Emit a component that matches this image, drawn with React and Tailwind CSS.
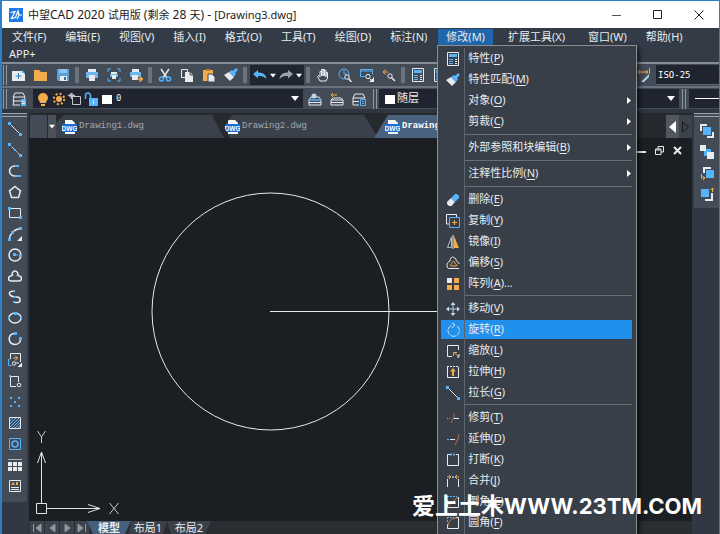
import { useState } from "react"

const B = "#55b4fa"
const W = "#e8ebee"
const O = "#f2ac4c"

function Ico({ children }) {
  return (
    <svg width="14" height="14" viewBox="0 0 14 14" fill="none" className="shrink-0" aria-hidden="true">
      {children}
    </svg>
  )
}

const Dot = ({ x, y, c = B, s = 3 }) => <rect x={x} y={y} width={s} height={s} fill={c} />

const icons = {
  novo: (
    <>
      <path d="M0 3h10l3 3v7H0z" fill={W} />
      <path d="M10 2v3h3" fill={B} />
      <path d="M6.500 5v6M3.500 8h6" stroke="#2f7fc0" />
    </>
  ),
  open: <path d="M0 2h5l2 2h6v9H0z" fill={O} />,
  save: (
    <>
      <path d="M1 1h12v12H2l-1-1z" fill="#5b9fd8" />
      <path d="M3 1h8v4H3z" fill="#8fc4ee" />
      <path d="M4 8h7v5H4z" fill={W} />
      <path d="M8 9h2v3H8z" fill="#3d6c96" />
    </>
  ),
  print: (
    <>
      <path d="M3 1h8v3H3z" fill={W} />
      <path d="M1 4h12v6H1z" fill="#6fb6ec" />
      <path d="M4 7h6v6H4z" fill={W} />
    </>
  ),
  preview: (
    <>
      <path d="M1 4V1h3M10 1h3v3M1 10v3h3M10 13h3v-3" stroke={B} />
      <path d="M4 4h6v2H4z" fill={W} />
      <path d="M3 6h8v3H3z" fill="#6fb6ec" />
      <path d="M5 7h4v4H5z" fill={W} />
    </>
  ),
  publish: (
    <>
      <path d="M3 1h7v3H3z" fill={W} />
      <path d="M1 4h11v5H1z" fill="#6fb6ec" />
      <path d="M3 7h6v5H3z" fill={W} />
      <path d="M8 11h5M10.500 8.500l3 2.500-3 2.500" stroke={O} strokeWidth="1.500" />
    </>
  ),
  cut: (
    <>
      <path d="M3 1l6 9M11 1L5 10" stroke={W} strokeWidth="1.500" />
      <circle cx="3.500" cy="11" r="2" stroke={B} strokeWidth="1.500" />
      <circle cx="10.500" cy="11" r="2" stroke={B} strokeWidth="1.500" />
    </>
  ),
  copy: (
    <>
      <path d="M1.500 1.500h6v8h-6z" stroke={W} />
      <path d="M5 4h5l3 3v7H5z" fill={W} />
      <path d="M10 4v3h3" stroke="#434b57" />
    </>
  ),
  paste: (
    <>
      <path d="M1 2h10v11H1z" fill={O} />
      <path d="M4 1h4v2H4z" fill="#b9793a" />
      <path d="M6 6h4l3 3v5H6z" fill={W} stroke="#434b57" />
    </>
  ),
  brush: (
    <>
      <path d="M0 7l5-3 5 5-4 4z" fill={W} />
      <path d="M5 4l3-2 1 1 3-3 2 2-3 3 1 1-2 3z" fill={B} />
    </>
  ),
  undo: <path d="M0 6l5-4v2.500c5 0 8 2 8.500 6.500C11 8.500 9 8 5 8v2.500z" fill={B} />,
  redo: <path d="M14 6L9 2v2.500C4 4.500 1 6.500.500 11 3 8.500 5 8 9 8v2.500z" fill="#9aa3ad" />,
  hand: (
    <path
      d="M4 13L1.500 8.500l1-1L4 9V3.500h1.500V8 1.500H7V8 1.500h1.500V8 2.500H10V9 4.500h1.500V10L10 13z"
      stroke={W}
    />
  ),
  zoomTime: (
    <>
      <circle cx="6" cy="6" r="5" stroke={B} />
      <path d="M6 2v4h3" stroke={B} />
      <circle cx="9" cy="9" r="2.200" fill="#434b57" stroke={W} />
      <path d="M10.500 10.500L13.500 14" stroke={W} strokeWidth="1.500" />
    </>
  ),
  zoomWin: (
    <>
      <path d="M.500 8.500v-7h12v5M.500 3h12M.500 8.500H5" stroke={B} />
      <circle cx="8" cy="8.500" r="2.200" stroke={W} />
      <path d="M9.500 10.500l2 2" stroke={W} />
      <path d="M14 9v5H9z" fill={W} />
    </>
  ),
  zoomPrev: (
    <>
      <path d="M1 4h5M3.500 1.500L1 4l2.500 2.500" stroke={O} />
      <circle cx="8" cy="8" r="2.200" stroke={W} />
      <path d="M9.500 9.500L13 13" stroke={W} strokeWidth="1.500" />
    </>
  ),
  props: (
    <>
      <path d="M1.500.500h11v13h-11z" stroke={W} />
      <path d="M3 2h8v3H3z" fill={B} />
      <path d="M3 7.500h4M3 9.500h4M3 11.500h4" stroke={B} />
      <path d="M9 7.500h2M9 9.500h2M9 11.500h2" stroke={W} />
    </>
  ),
  layers: (
    <>
      <path d="M1 5l2-4h8l2 4zM1 9l1-4M13 7l-1-2M1 9h8M1 13l1-4M1 13h7" stroke={W} />
      <path d="M9 7h5v7H9z" fill={B} />
      <path d="M10 9.500h3M10 11.500h3" stroke={W} />
    </>
  ),
  layerCur: (
    <>
      <path d="M1 8l2-3h8l2 3v5H1zM1 10.500h12" stroke={W} />
      <path d="M1 8h12" stroke={B} strokeWidth="1.500" />
      <circle cx="6" cy="4" r="2.500" fill="#b9d4e6" />
    </>
  ),
  layerPrev: (
    <>
      <path d="M1 8l2-2h8l2 2v5H1zM1 8h12M1 10.500h12" stroke={W} />
      <path d="M1 3h6M3 1L1 3l2 2" stroke={O} />
    </>
  ),
  layerState: (
    <>
      <path d="M1 6l2-4h8l2 4zM1 6v7h6M1 9.500h6" stroke={W} />
      <path d="M8.500 7.500h5v6h-5z" stroke={B} />
      <path d="M10 9.500h2M10 11.500h2" stroke={B} />
    </>
  ),
  bulb: <path d="M7 1a5 5 0 0 1 5 5c0 2-2 3-2 5H4c0-2-2-3-2-5a5 5 0 0 1 5-5zM5 12h4v2H5z" fill={O} />,
  sun: (
    <>
      <circle cx="7" cy="7" r="3" fill={O} />
      <circle cx="7" cy="7" r="5.200" stroke={O} strokeWidth="2" strokeDasharray="2 2.080" />
    </>
  ),
  frame: (
    <>
      <path d="M4.500 4.500h8v8h-8zM0 3.500h7M3.500 1v6" stroke="#c3c7cb" />
      <circle cx="3.500" cy="3.500" r="2" stroke="#c3c7cb" />
    </>
  ),
  lock: (
    <>
      <path d="M1.500 7V3.500a2.500 2.500 0 0 1 5 0V7" stroke={B} strokeWidth="1.500" />
      <path d="M5 6h9v8H5z" fill={B} />
      <path d="M9 8h1v4H9z" fill={W} />
    </>
  ),
  white: <path d="M2 3h10v9H2z" fill="#fff" />,
  dim: (
    <>
      <path d="M.500 1v12M13.500 0v6" stroke="#aab4bd" />
      <path d="M2 4h10M4 2L2 4l2 2M10 2l2 2-2 2" stroke={O} />
      <path d="M13 6v3l-5 5H5z" fill="#a9d3ea" />
    </>
  ),
  line: (
    <>
      <path d="M1 1l12 12" stroke={W} />
      <Dot x={0} y={0} />
      <Dot x={11} y={11} />
    </>
  ),
  xline: (
    <>
      <path d="M1 1l12 12" stroke={W} strokeDasharray="3 1" />
      <Dot x={0} y={0} />
      <Dot x={6} y={6} s={2} />
      <Dot x={11} y={11} />
    </>
  ),
  pline: (
    <>
      <path d="M10 2H6.500a5 5 0 0 0 0 10H12" stroke={W} strokeWidth="1.500" />
      <path d="M7 2h4M7 12h6" stroke={B} strokeWidth="2" />
    </>
  ),
  polygon: <path d="M7 1.500l5.500 4.300-2 6.700h-7l-2-6.700z" stroke={W} strokeWidth="1.500" />,
  rect: (
    <>
      <path d="M1.500 2.500h11v9h-11z" stroke={W} />
      <Dot x={0} y={1} />
      <Dot x={11} y={10} />
    </>
  ),
  arc: (
    <>
      <path d="M1 13C2 7 6 2 13 1.500" stroke={W} strokeWidth="1.500" />
      <Dot x={0} y={11} />
      <Dot x={3} y={4} />
      <Dot x={11} y={0} />
      <path d="M14 9v5H9z" fill={W} />
    </>
  ),
  circle: (
    <>
      <circle cx="7" cy="7" r="6" stroke={W} strokeWidth="1.500" />
      <path d="M7 7h6" stroke={B} strokeDasharray="3 1" />
      <Dot x={5} y={5} />
      <Dot x={11} y={6} />
    </>
  ),
  cloud: (
    <path
      d="M3 12a2.300 2.300 0 0 1 0-5 2 2 0 0 1 1.500-1 2.800 2.800 0 1 1 5 0A2 2 0 0 1 11 7a2.500 2.500 0 0 1 0 5z"
      stroke={W}
      strokeWidth="1.500"
    />
  ),
  spline: (
    <>
      <path d="M7 1.500C3 .500 1 2 1.500 4S5 7 9 7s4 5 1 5.500H7" stroke={W} strokeWidth="1.500" />
      <Dot x={5} y={0} s={2} />
      <Dot x={6} y={6} s={2} />
      <Dot x={5} y={11} s={2} />
    </>
  ),
  ellipse: (
    <>
      <ellipse cx="7" cy="7" rx="6" ry="5" stroke={W} strokeWidth="1.500" />
      <Dot x={6} y={1} />
      <Dot x={0} y={6} s={2} />
      <Dot x={12} y={6} s={2} />
    </>
  ),
  earc: (
    <>
      <path d="M6 1.500C-1 3 0 12 7 12.500c3 0 5.500-2 5.500-5.500" stroke={W} strokeWidth="1.500" />
      <Dot x={6} y={0} />
      <Dot x={11} y={5} />
    </>
  ),
  insert: (
    <>
      <path d="M2.500 6V.500h10V9" stroke={W} />
      <path d="M2 6.500H.500v6H4" stroke={B} />
      <path d="M5 5h5M7 2.500L9.500 5 7 7.500" stroke={O} />
      <circle cx="6" cy="10.500" r="1.700" stroke={W} />
      <path d="M14 10v4h-4zM8 10h3" stroke={W} fill={W} />
    </>
  ),
  block: (
    <>
      <path d="M8 12.500H2.500v-10h8V8" stroke={W} />
      <circle cx="11" cy="11" r="1.800" stroke={W} />
      <Dot x={1} y={1} s={2} />
    </>
  ),
  points: (
    <>
      {[[2, 2], [10, 2], [6, 6], [2, 10], [10, 10]].map(([x, y]) => (
        <Dot key={`${x}-${y}`} x={x} y={y} s={2} />
      ))}
    </>
  ),
  hatch: (
    <>
      <path d="M2 5l3-3M2 8l6-6M2 11l9-9M4 12l8-8M7 12l5-5M10 12l2-2" stroke={B} />
      <path d="M1.500 1.500h11v11h-11z" stroke={W} />
    </>
  ),
  region: (
    <>
      <path d="M1.500 1.500h11v11h-11z" stroke={B} />
      <circle cx="7" cy="7" r="3" stroke={B} strokeWidth="1.500" />
    </>
  ),
  table: (
    <>
      <path d="M0 1.500h14" stroke="#aeb4ba" />
      {[[0, 4], [5, 4], [10, 4], [0, 9], [5, 9], [10, 9]].map(([x, y]) => (
        <Dot key={`${x}-${y}`} x={x} y={y} s={4} c={W} />
      ))}
    </>
  ),
  mtext: (
    <>
      <path d="M1.500 1.500h11v11h-11z" stroke={W} />
      <path d="M3 6l2-3 2 3h1V3h2v3z" fill={O} />
      <path d="M3 8.500h8M3 10.500h8" stroke={W} />
    </>
  ),
  erase: (
    <>
      <path d="M1 9l4-4 4 4-3.500 4H3l-2-2z" fill={W} />
      <path d="M5 5l4-4h2l2 2v2L9 9z" fill={B} />
    </>
  ),
  duplicate: (
    <>
      <path d="M3 10H.500V.500h10V3" stroke={W} />
      <path d="M3.500 3.500h10v10h-10z" stroke={B} />
      <path d="M8.500 6v5M6 8.500h5" stroke={O} />
    </>
  ),
  mirror: (
    <>
      <path d="M5.500 2v10.500H1.500z" stroke="#b9bec3" />
      <path d="M8 1l5 12H8z" fill={O} />
      <path d="M7 0v14" stroke={W} />
    </>
  ),
  offset: (
    <>
      <path d="M13 8c0-2-2-2-2.500-3C9-.500 4 0 4 5 2 6 1 7 1 9.500S2 12.500 4 12.500h9" stroke={W} />
      <path d="M5 10c-1-1 0-2 1-2.500 0-3 3-3 3 0 1 .500 2 1 1.500 2.500z" stroke={O} />
    </>
  ),
  array: (
    <>
      <Dot x={1} y={1} s={5} c={W} />
      <Dot x={8} y={1} s={5} c={O} />
      <Dot x={1} y={8} s={5} c={O} />
      <Dot x={8} y={8} s={5} c={O} />
    </>
  ),
  move: (
    <>
      <path d="M7 2v10M2 7h10" stroke="#b5d3e8" />
      <path d="M7 0l2.500 3h-5zM7 14l2.500-3h-5zM0 7l3-2.500v5zM14 7l-3-2.500v5z" fill="#c5d8e5" />
    </>
  ),
  rotate: (
    <>
      <path d="M11 3A5.700 5.700 0 1 1 6 2.200" stroke="#cfe0ec" strokeDasharray="5 1" />
      <path d="M6 0l3 2-3 3" stroke="#dff0ff" />
    </>
  ),
  scale: (
    <>
      <path d="M6 12.500H1.500v-11h11V6" stroke={W} />
      <path d="M7.500 12V8.500H11M9 9.500l4 3" stroke={O} />
      <path d="M11 13h2v-3" stroke={W} />
    </>
  ),
  stretch: (
    <>
      <path d="M1.500 2v10.500h11V2" stroke={W} />
      <path d="M1 1.500h12" stroke={W} strokeDasharray="2 1" />
      <path d="M7 3l3 3.500H8V11H6V6.500H4z" fill={O} />
    </>
  ),
  trim: (
    <>
      <path d="M1 7.500h4" stroke={B} strokeDasharray="1 1" />
      <path d="M8 7.500h5" stroke={W} />
      <path d="M8 2v4l-3 6" stroke="#b66d45" />
    </>
  ),
  extend: (
    <>
      <path d="M1 7.500h2" stroke={B} />
      <path d="M4 7.500h5" stroke={W} />
      <path d="M13 2l-1 5-3 6" stroke="#b66d45" />
    </>
  ),
  break: (
    <>
      <path d="M4 1.500H1.500v11h11v-11H10" stroke={W} />
      <path d="M4 1.500h6" stroke={B} strokeWidth="2" strokeDasharray="2 1" />
    </>
  ),
  join: (
    <>
      <path d="M1.500 13V5M12.500 13V5" stroke={W} />
      <path d="M1 3h4M3 1l2 2-2 2M13 3H9M11 1L9 3l2 2" stroke={O} />
      <Dot x={6} y={2} s={2} />
    </>
  ),
  chamfer: (
    <>
      <path d="M1.500 6v6.500h11V2" stroke={W} />
      <path d="M1 1.500h10M1.500 1v5" stroke={B} strokeDasharray="2 1" />
      <path d="M2 11l10-9" stroke="#d0834a" />
    </>
  ),
  fillet: (
    <>
      <path d="M1.500 8v4.500h11V1.500H10" stroke={W} />
      <path d="M1 1.500h7M1.500 1v6" stroke={B} strokeDasharray="2 1" />
      <path d="M2 10c0-4 3-8 9-8" stroke="#d0834a" />
    </>
  ),
  front: (
    <>
      <path d="M1 7V1h6M13 8v5H7" stroke={W} strokeWidth="2" />
      <path d="M3 3h8v8H3z" fill={B} />
    </>
  ),
  back: (
    <>
      <path d="M4 4h7v7H4z" fill={B} />
      <path d="M0 0h6v6H0zM7 7h7v7H7z" fill={W} />
    </>
  ),
  above: (
    <>
      <path d="M4 7V2h7" stroke={W} strokeWidth="2" />
      <path d="M6 4h8v8H6z" fill={B} />
      <path d="M1.500 8v4H5M3 10l2 2-2 2" stroke={O} />
    </>
  ),
  under: (
    <>
      <path d="M12 6v7H5" stroke={W} strokeWidth="2" />
      <path d="M1 2h8v8H1z" fill={B} />
      <path d="M12.500 5V1M10.500 3l2-2 2 2" stroke={O} />
    </>
  ),
}

const menus = [
  ["文件", "F"],
  ["编辑", "E"],
  ["视图", "V"],
  ["插入", "I"],
  ["格式", "O"],
  ["工具", "T"],
  ["绘图", "D"],
  ["标注", "N"],
  ["修改", "M"],
  ["扩展工具", "X"],
  ["窗口", "W"],
  ["帮助", "H"],
]

const modifyMenu = [
  [["props", "特性", "P"], ["brush", "特性匹配", "M"], [null, "对象", "O", true], [null, "剪裁", "C", true]],
  [[null, "外部参照和块编辑", "B", true]],
  [[null, "注释性比例", "N", true]],
  [["erase", "删除", "E"], ["duplicate", "复制", "Y"], ["mirror", "镜像", "I"], ["offset", "偏移", "S"], ["array", "阵列", "A", false, "..."]],
  [["move", "移动", "V"], ["rotate", "旋转", "R"], ["scale", "缩放", "L"], ["stretch", "拉伸", "H"], ["line", "拉长", "G"]],
  [["trim", "修剪", "T"], ["extend", "延伸", "D"], ["break", "打断", "K"], ["join", "合并", "J"], ["chamfer", "倒角", "C"], ["fillet", "圆角", "F"]],
]

const drawTools = [
  ["line", "直线"],
  ["xline", "构造线"],
  ["pline", "多段线"],
  ["polygon", "正多边形"],
  ["rect", "矩形"],
  ["arc", "圆弧"],
  ["circle", "圆"],
  ["cloud", "修订云线"],
  ["spline", "样条曲线"],
  ["ellipse", "椭圆"],
  ["earc", "椭圆弧"],
  ["insert", "插入块"],
  ["block", "创建块"],
  ["points", "点"],
  ["hatch", "图案填充"],
  ["region", "面域"],
  ["table", "表格"],
  ["mtext", "多行文字"],
]

function Tool({ icon, label }) {
  return (
    <button type="button" aria-label={label} className="flex h-5 w-5 shrink-0 items-center justify-center hover:bg-white/10">
      <Ico>{icons[icon]}</Ico>
    </button>
  )
}

const Grip = () => <span className="h-5 w-1 shrink-0 border-x border-[#8d98a5]" />
const Divider = () => <span className="mr-px h-4 w-1 shrink-0 bg-[#6b737d]" />

function Caret({ small }) {
  return (
    <svg width="8" height="5" viewBox="0 0 8 5" className={small ? "w-[6px] shrink-0" : "shrink-0"} aria-hidden="true">
      <path d="M0 0h8L4 5z" fill="#fff" />
    </svg>
  )
}

function ModifyMenu() {
  const [active, setActive] = useState("旋转")
  return (
    <div className="absolute -left-px top-4 z-20 w-[200px] border border-[#8b8f93] bg-[#383f48] py-0.5 shadow-[3px_3px_4px_rgba(0,0,0,0.5)]">
      {modifyMenu.map((group, i) => (
        <ul
          key={i}
          className={
            i === 0
              ? ""
              : i > 3
                ? "ml-[27px] mr-1 mt-px border-t border-[#6a6e73] pt-0.5"
                : "ml-[27px] mr-1 mt-0.5 border-t border-[#6a6e73] pt-0.5"
          }
        >
          {group.map(([icon, label, key, sub, tail]) => (
            <li key={label} className={i === 0 ? "ml-[3px] mr-1 py-px" : "-ml-6 py-px"}>
              <button
                type="button"
                onMouseEnter={() => setActive(label)}
                className={
                  label === active
                    ? "flex h-[19px] w-full items-center bg-[#2190ec] text-left"
                    : "flex h-[19px] w-full items-center text-left"
                }
              >
                <span className="flex w-[23px] justify-center">{icon && <Ico>{icons[icon]}</Ico>}</span>
                <span className="pl-1">
                  {label}(<u className="underline-offset-2">{key}</u>){tail}
                </span>
                {sub && (
                  <svg width="4" height="7" viewBox="0 0 4 7" className="ml-auto mr-px" aria-hidden="true">
                    <path d="M0 0l4 3.500L0 7z" fill="#fff" />
                  </svg>
                )}
              </button>
            </li>
          ))}
        </ul>
      ))}
      <span className="pointer-events-none absolute bottom-0 left-[26px] top-0.5 w-px bg-[#5d636a]" />
    </div>
  )
}

function DwgIcon() {
  return (
    <svg width="15" height="14" viewBox="0 0 15 14" className="shrink-0" aria-hidden="true">
      <path d="M3 0h7l3 3v11H3z" fill="#f4f8fb" />
      <rect y="4" width="15" height="8" rx="1" fill="#1a6fd6" />
      <text x="7.500" y="10.500" textAnchor="middle" fontSize="6.500" fontWeight="bold" fill="#fff" fontFamily="Liberation Sans, sans-serif">
        DWG
      </text>
    </svg>
  )
}

function TitleBar() {
  return (
    <header className="flex h-[27px] shrink-0 items-center bg-white pl-[7px] text-[11px] text-[#1c1c1c]">
      <svg width="14" height="14" viewBox="0 0 14 14" aria-hidden="true">
        <path d="M0 0h14v14H0z" fill="#1f78e6" />
        <path d="M1.500 4.500L6 3.500 2.500 10.500l4-1L9 3l1 4 3 0M8 11l2-4" fill="none" stroke="#fff" strokeWidth="1.200" />
      </svg>
      <h1 className="ml-[5px] text-[12px] leading-4">
        <span className="text-[11px]">中望</span>CAD 2020 <span className="text-[11px]">试用版</span> (
        <span className="text-[11px]">剩余</span> 28 <span className="text-[11px]">天</span>) -{" "}
        <span className="text-[11px]">[Drawing3.dwg]</span>
      </h1>
      <div className="ml-auto flex">
        <button type="button" aria-label="最小化" className="flex h-6 w-[41px] items-center justify-center">
          <svg width="10" height="10" stroke="#555"><path d="M0 5.500h9" /></svg>
        </button>
        <button type="button" aria-label="最大化" className="flex h-6 w-[41px] items-center justify-center">
          <svg width="10" height="10" stroke="#222" fill="none"><path d="M.500.500h8v8h-8z" /></svg>
        </button>
        <button type="button" aria-label="关闭" className="flex h-6 w-[41px] items-center justify-center">
          <svg width="10" height="10" stroke="#222"><path d="M.500.500l9 9M9.500.500l-9 9" /></svg>
        </button>
      </div>
    </header>
  )
}

function MenuBar() {
  return (
    <nav className="shrink-0 border-b-2 border-[#858d98] bg-[#323b46] pt-px">
      <ul className="flex gap-[3px] pl-0.5">
        {menus.map(([label, key]) => (
          <li key={key} className={key === "X" ? "relative mx-1" : "relative"}>
            <button
              type="button"
              className={key === "M" ? "h-4 bg-[#1f66ac] px-2 leading-4 whitespace-nowrap" : "h-4 px-2 leading-4 whitespace-nowrap"}
            >
              {label}({key})
            </button>
            {key === "M" && <ModifyMenu />}
          </li>
        ))}
      </ul>
      <button type="button" className="h-4 px-[7px] leading-4">APP+</button>
    </nav>
  )
}

function Toolbars() {
  return (
    <div className="shrink-0 bg-[#434b57]">
      <div className="flex h-6 items-center gap-0.5 border-b-2 border-[#69727e] pl-px">
        <Grip />
        <Tool icon="novo" label="新建" />
        <Tool icon="open" label="打开" />
        <Tool icon="save" label="保存" />
        <Divider />
        <Tool icon="print" label="打印" />
        <Tool icon="preview" label="打印预览" />
        <Tool icon="publish" label="发布" />
        <Divider />
        <Tool icon="cut" label="剪切" />
        <Tool icon="copy" label="复制" />
        <Tool icon="paste" label="粘贴" />
        <Tool icon="brush" label="特性匹配" />
        <Divider />
        <div className="flex h-5 items-center bg-[#1f2630] pr-0.5">
          <Tool icon="undo" label="放弃" />
          <Caret small />
          <Tool icon="redo" label="重做" />
          <Caret small />
        </div>
        <Divider />
        <Tool icon="hand" label="平移" />
        <Tool icon="zoomTime" label="实时缩放" />
        <Tool icon="zoomWin" label="窗口缩放" />
        <Tool icon="zoomPrev" label="上一个" />
        <Divider />
        <Tool icon="props" label="特性" />
        <Tool icon="props" label="特性面板" />
        <span className="flex-1" />
        <Tool icon="dim" label="标注样式" />
        <input
          aria-label="当前标注样式"
          defaultValue="ISO-25"
          className="ml-px h-5 w-[63px] border-b border-[#5d6671] bg-[#1f2430] pl-0.5 font-['DejaVu_Sans_Mono',monospace] text-[9px] text-white outline-none"
        />
      </div>
      <div className="flex h-[25px] items-center gap-0.5 border-b-4 border-[#30363f] pl-px">
        <Grip />
        <Tool icon="layers" label="图层特性" />
        <div className="ml-0.5 flex h-[19px] w-[270px] items-center gap-0.5 bg-[#1f2430] pl-[3px] pr-1">
          <Ico>{icons.bulb}</Ico>
          <Ico>{icons.sun}</Ico>
          <Ico>{icons.frame}</Ico>
          <Ico>{icons.lock}</Ico>
          <Ico>{icons.white}</Ico>
          <select aria-label="图层" className="flex-1 appearance-none bg-[#1f2430] font-['DejaVu_Sans_Mono',monospace] text-[9px] outline-none">
            <option>0</option>
          </select>
          <Caret />
        </div>
        <Tool icon="layerCur" label="置为当前" />
        <Tool icon="layerPrev" label="上一图层" />
        <Tool icon="layerState" label="图层状态" />
        <span className="ml-0.5 flex"><Grip /></span>
        <div className="flex h-[19px] flex-1 items-center bg-[#1f2430] pl-1 pr-1">
          <Ico>{icons.white}</Ico>
          <select aria-label="颜色" className="flex-1 appearance-none bg-[#1f2430] text-[11px] outline-none">
            <option>随层</option>
          </select>
          <Caret />
        </div>
        <span className="ml-px flex"><Grip /></span>
        <button type="button" aria-label="线型" className="ml-px flex h-[19px] w-[30px] items-center bg-[#1f2430] pl-1.5">
          <span className="h-px w-full bg-white" />
        </button>
      </div>
    </div>
  )
}

function DocTabs() {
  return (
    <div className="flex h-[25px] shrink-0 bg-[#262a2f] pt-0.5 font-['Liberation_Mono',monospace] text-[9px] text-[#a3a8ae]">
      <span className="ml-px w-[17px] bg-[#434b57]" />
      <button type="button" aria-label="图形列表" className="ml-px flex w-2 items-center justify-center bg-[#4a515b]">
        <Caret small />
      </button>
      <button
        type="button"
        className="flex w-[168px] items-center gap-0.5 bg-[#3a414b] pl-1.5 [clip-path:polygon(0_8px,8px_0,156px_0,100%_100%,0_100%)]"
      >
        <DwgIcon />
        Drawing1.dwg
      </button>
      <button
        type="button"
        className="-ml-1.5 flex w-[160px] items-center gap-0.5 bg-[#3a414b] pl-[7px] [clip-path:polygon(6px_12px,14px_0,146px_0,100%_100%,12px_100%)]"
      >
        <DwgIcon />
        Drawing2.dwg
      </button>
      <button
        type="button"
        className="-ml-1 flex w-[160px] items-center gap-0.5 bg-[#4a6280] pl-[11px] font-bold text-white [clip-path:polygon(0_100%,14px_0,146px_0,100%_100%)]"
      >
        <DwgIcon />
        Drawing3.dwg
      </button>
      <div className="ml-auto flex">
        <button type="button" aria-label="向左" className="flex w-[13px] items-center justify-center bg-[#50575f]">
          <svg width="7" height="12"><path d="M7 0v12L0 6z" fill="#fff" /></svg>
        </button>
        <button type="button" aria-label="向右" className="flex w-[13px] items-center justify-center bg-[#3c434d]">
          <svg width="7" height="12"><path d="M.500 1v10l6-5z" fill="none" stroke="#15181c" /></svg>
        </button>
      </div>
    </div>
  )
}

function LayoutTabs() {
  const arrows = [
    ["第一个", "M1.500 1v8M9 1v8L4 5z"],
    ["前一个", "M8 1v8L3 5z"],
    ["后一个", "M3 1v8l5-4z"],
    ["最后一个", "M8.500 1v8M1 1v8l5-4z"],
  ]
  return (
    <div className="flex h-[13px] shrink-0 bg-[#2a2d31]">
      <div className="flex gap-px pl-px">
        {arrows.map(([label, d]) => (
          <button key={label} type="button" aria-label={label} className="flex w-3.5 items-center justify-center bg-[#3c434c]">
            <svg width="10" height="10" stroke="#8f969d" fill="#8f969d"><path d={d} strokeWidth="1" /></svg>
          </button>
        ))}
      </div>
      <button type="button" className="-ml-0.5 w-11 bg-[#45607f] font-bold leading-[13px] [clip-path:polygon(0_0,100%_0,38px_100%,6px_100%)]">
        模型
      </button>
      <button type="button" className="-ml-0.5 w-[38px] bg-[#3a414a] leading-[13px] [clip-path:polygon(2px_0,100%_0,34px_100%,0_100%)]">
        布局1
      </button>
      <button type="button" className="w-[44px] bg-[#3a414a] leading-[13px] [clip-path:polygon(0_0,100%_0,38px_100%,4px_100%)]">
        布局2
      </button>
    </div>
  )
}

function Canvas() {
  return (
    <main className="relative flex-1 overflow-hidden bg-[#1b1f23]">
      <div className="flex justify-end gap-1 pr-2 pt-[5px]">
        <button type="button" aria-label="最小化图形" className="flex h-3.5 w-3.5 items-center justify-center">
          <svg width="9" height="9" stroke="#e8ebee" strokeWidth="2"><path d="M0 6h9" /></svg>
        </button>
        <button type="button" aria-label="还原图形" className="flex h-3.5 w-3.5 items-center justify-center">
          <svg width="9" height="9" stroke="#e8ebee" fill="none"><path d="M.500 3h5.500v5.500H.500zM.500 4h5M3 3V.500h5.500V6H6" /></svg>
        </button>
        <button type="button" aria-label="关闭图形" className="flex h-3.5 w-3.5 items-center justify-center">
          <svg width="9" height="9" stroke="#e8ebee" strokeWidth="2"><path d="M1 1l7 7M8 1L1 8" /></svg>
        </button>
      </div>
      <svg className="pointer-events-none absolute left-0 top-0" width="600" height="320" fill="none" stroke="#e6eaec">
        <circle cx="241.500" cy="173.500" r="118.500" />
        <path d="M241 173.500h340" />
      </svg>
      <svg className="pointer-events-none absolute bottom-0 left-0" width="110" height="100" fill="none" stroke="#dfe2e4">
        <path d="M7.500 82.500h10v10h-10zM12.500 82V32M12.500 31l-4 11M12.500 31l4 11M18 87.500h52M71 87.500l-12-4M71 87.500l-12 4" />
        <path d="M8.500 10l4 6 4-6M12.500 16v6M80.500 82l9 11M89.500 82l-9 11" stroke="#c6cacd" />
      </svg>
    </main>
  )
}

export default function App() {
  return (
    <div className="relative flex h-screen flex-col overflow-hidden border-l-2 border-r border-t border-[#2b80c8] bg-[#323843] font-['Noto_Sans','Noto_Sans_CJK_SC',sans-serif] text-[11px] text-[#e9ecef]">
      <TitleBar />
      <MenuBar />
      <Toolbars />
      <div className="flex min-h-0 flex-1">
        <aside className="w-[27px] shrink-0">
          <div className="flex w-[25px] flex-col items-center gap-px border-t-4 border-double border-[#9aa5ae] bg-[#434b57] pb-1.5 pt-0.5">
            {drawTools.map(([icon, label]) => (
              <Tool key={icon} icon={icon} label={label} />
            ))}
          </div>
        </aside>
        <section className="flex min-w-0 flex-1 flex-col">
          <DocTabs />
          <Canvas />
          <LayoutTabs />
        </section>
        <aside className="w-[27px] shrink-0 pl-0.5">
          <div className="flex flex-col items-center gap-px border-t-4 border-double border-[#9aa5ae] bg-[#434b57] pb-1 pt-1">
            <Tool icon="front" label="前置" />
            <Tool icon="back" label="后置" />
            <Tool icon="above" label="置于对象之上" />
            <Tool icon="under" label="置于对象之下" />
          </div>
        </aside>
      </div>
      <p className="pointer-events-none absolute bottom-3 right-[17px] z-30 whitespace-nowrap font-['Inter','Noto_Sans_CJK_SC',sans-serif] text-[22px] font-bold leading-8 text-white">
        <span className="text-[23px]">爱上土木</span>WWW.23TM.COM
      </p>
    </div>
  )
}
